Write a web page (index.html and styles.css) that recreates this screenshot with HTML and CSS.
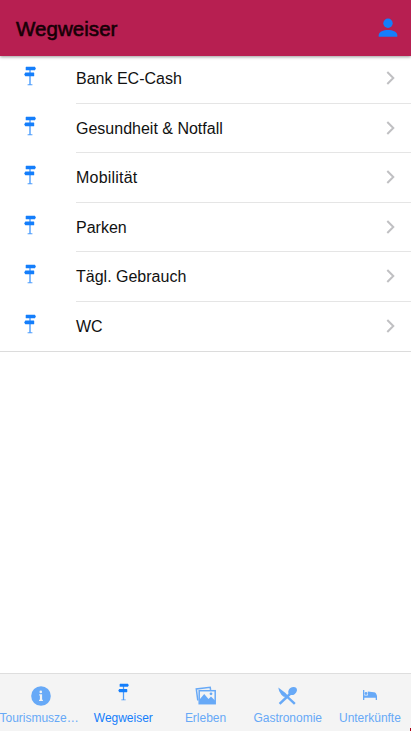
FILE: index.html
```html
<!DOCTYPE html>
<html lang="de">
<head>
<meta charset="utf-8">
<title>Wegweiser</title>
<link rel="stylesheet" href="styles.css">
</head>
<body>
<svg class="defs" aria-hidden="true">
  <symbol id="sign" viewBox="0 0 12 20">
    <path d="M5.300 1h1.400v18H5.300zM3.600 18.300h4.800v1H3.600z" opacity=".75"/>
    <path d="M2.200.8h8.700l1 1.700-1 1.800H2.200q-.5 0-.5-.5V1.300q0-.5.5-.5zM1.300 6.600H9.700q.5 0 .5.500v2.700q0 .5-.5.500H1.300L.2 8.400z"/>
  </symbol>
  <symbol id="chevron" viewBox="0 0 9 14">
    <path d="M1.300 1l6 6-6 6" fill="none" stroke="#c0c0c3" stroke-width="2"/>
  </symbol>
</svg>
<header class="header">
  <h1 class="title">Wegweiser</h1>
  <svg class="user" viewBox="0 0 20 20"><circle cx="10" cy="5.300" r="4.700"/><path d="M.7 18.700v-1.500C.7 13.700 5.500 11.900 10 11.900s9.300 1.800 9.300 5.300v1.500z"/></svg>
</header>
<main class="content">
  <ul class="list">
    <li class="item"><svg class="sign"><use href="#sign"/></svg><div class="inner"><span>Bank EC-Cash</span><svg class="chevron"><use href="#chevron"/></svg></div></li>
    <li class="item"><svg class="sign"><use href="#sign"/></svg><div class="inner"><span>Gesundheit &amp; Notfall</span><svg class="chevron"><use href="#chevron"/></svg></div></li>
    <li class="item"><svg class="sign"><use href="#sign"/></svg><div class="inner"><span class="wide">Mobilität</span><svg class="chevron"><use href="#chevron"/></svg></div></li>
    <li class="item"><svg class="sign"><use href="#sign"/></svg><div class="inner"><span>Parken</span><svg class="chevron"><use href="#chevron"/></svg></div></li>
    <li class="item"><svg class="sign"><use href="#sign"/></svg><div class="inner"><span>Tägl. Gebrauch</span><svg class="chevron"><use href="#chevron"/></svg></div></li>
    <li class="item"><svg class="sign"><use href="#sign"/></svg><div class="inner"><span>WC</span><svg class="chevron"><use href="#chevron"/></svg></div></li>
  </ul>
</main>
<nav class="tabs">
  <a class="tab">
    <span class="icon"><svg width="20" height="20" viewBox="0 0 20 20"><circle cx="10" cy="10" r="9.800"/><circle cx="9.800" cy="5.900" r="1.300" fill="#f4f4f4"/><path d="M8.200 8.300h2.900v5.400h.8V15H8.100v-1.300h.8V9.600h-.7z" fill="#f4f4f4"/></svg></span>
    <span class="label label-first">Tourismusze…</span>
  </a>
  <a class="tab active">
    <span class="icon icon-sign"><svg width="11" height="18"><use href="#sign"/></svg></span>
    <span class="label">Wegweiser</span>
  </a>
  <a class="tab">
    <span class="icon"><svg width="22" height="20" viewBox="0 0 22 20">
      <path d="M2.800 14.500 1.300 3 15.200 1.300l.4 2.500" fill="none" stroke="currentColor" stroke-width="1.500"/>
      <rect x="4.200" y="4.700" width="16" height="13" fill="none" stroke="currentColor" stroke-width="1.500"/>
      <path d="M5 13l4.200-5 4.300 5 2.500-2.500 4 4V17.500H5z"/><circle cx="16" cy="7.800" r="1.400"/></svg></span>
    <span class="label">Erleben</span>
  </a>
  <a class="tab">
    <span class="icon icon-food"><svg width="20" height="20" viewBox="0 0 20 20">
      <path d="M1.300 1.500 8.500 6.900q1.700 1.500 2 2.600l8.200 7.400-1.700 1.900-8.200-7.900q-2.300.4-4.400-2.200Q1.500 5.300 1.300 1.500z"/>
      <path d="M2.600 17.900 13.500 7.500" fill="none" stroke="currentColor" stroke-width="2.500"/>
      <ellipse cx="15.600" cy="5" rx="4.700" ry="3.700" transform="rotate(-38 15.600 5)"/></svg></span>
    <span class="label">Gastronomie</span>
  </a>
  <a class="tab">
    <span class="icon icon-bed"><svg width="14" height="10" viewBox="0 0 14 10"><path d="M0 0h1.300v5.500H14V10h-1.300V7.800H1.300V10H0zM4.800 1.500l6.200.7q2.300.3 2.800 3.500h-9z"/><circle cx="3" cy="3.500" r="1.400"/></svg></span>
    <span class="label">Unterkünfte</span>
  </a>
  <i class="corner"></i>
</nav>
</body>
</html>
```
FILE: styles.css
```css
* { box-sizing: border-box; }
body {
  margin: 0;
  height: 731px;
  display: flex;
  flex-direction: column;
  overflow: hidden;
  background: #fff;
  color: #111;
  font-family: "Liberation Sans", Arial, sans-serif;
}
svg { display: block; fill: currentColor; flex: none; }
.defs { position: absolute; width: 0; height: 0; }
.header {
  flex: none;
  height: 56px;
  padding: 2px 13px 0 16px;
  display: flex;
  align-items: center;
  justify-content: space-between;
  background: #b71f51;
  box-shadow: 0 1px 3px rgba(0, 0, 0, .4);
  z-index: 1;
}
.title {
  margin: 0;
  font-size: 20.5px;
  font-weight: 400;
  letter-spacing: .05px;
  color: #160006;
  -webkit-text-stroke: .6px #160006;
}
.user { width: 20px; height: 20px; color: #147efb; margin-top: -2px; }
.content { flex: 1; }
.list {
  margin: -2px 0 0;
  padding: 0;
  list-style: none;
  border-bottom: 1px solid #dcdcdc;
}
.item { display: flex; height: 49.5px; }
.sign { width: 12px; height: 20px; margin: 12px 40px 0 24px; color: #147efb; }
.inner {
  flex: 1;
  display: flex;
  align-items: center;
  justify-content: space-between;
  padding: 2px 16px 0 0;
  font-size: 16px;
  border-bottom: 1px solid #e5e5e5;
}
.item:last-child .inner { border-bottom: 0; }
.wide { letter-spacing: .2px; }
.chevron { width: 9px; height: 14px; margin-top: -2px; }
.tabs {
  position: relative;
  flex: none;
  height: 58px;
  display: flex;
  background: #f4f4f4;
  border-top: 1px solid #dedede;
}
.tab {
  flex: 1 1 0;
  min-width: 0;
  display: flex;
  flex-direction: column;
  align-items: center;
  color: #67a9f7;
}
.active { color: #147efb; }
.icon { display: flex; height: 37px; padding-top: 12px; }
.icon-sign { padding-top: 9px; }
.icon-food { margin-right: 2px; }
.icon-bed { padding-top: 16px; }
.label { font-size: 12px; line-height: 14px; white-space: nowrap; letter-spacing: -.02px; }
.label-first { margin-right: 4px; }
.corner {
  position: absolute;
  right: 0;
  bottom: 0;
  width: 1px;
  height: 3px;
  background: #b00014;
}
```
